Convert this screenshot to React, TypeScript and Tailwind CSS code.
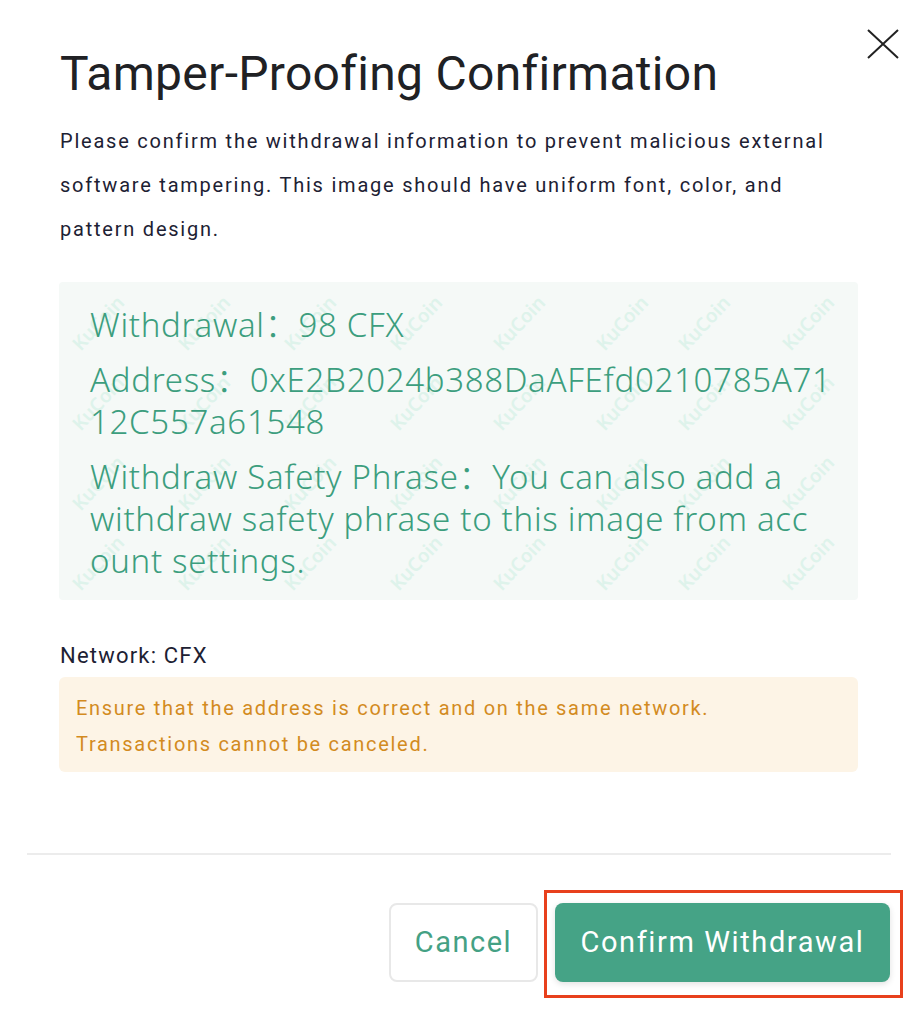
import React from "react";

const marks: { x: number; y: number }[] = [];
const cols = [39, 145, 251, 357, 460, 563, 645, 749];
const rows = [41, 121, 201, 281];
for (const y of rows) for (const x of cols) marks.push({ x, y });

const imgLines: string[][] = [
  ["Withdrawal：98 CFX"],
  ["Address：0xE2B2024b388DaAFEfd0210785A71", "12C557a61548"],
  ["Withdraw Safety Phrase：You can also add a", "withdraw safety phrase to this image from acc", "ount settings."],
];

export default function App() {
  return (
    <div className="relative w-[918px] h-[1010px] bg-white overflow-hidden" style={{ fontFamily: "Roboto, 'Noto Sans', sans-serif" }}>
      {/* close */}
      <button className="absolute left-[866px] top-[28px] w-[34px] h-[32px]" aria-label="close">
        <svg width="34" height="32" viewBox="0 0 34 32">
          <path d="M2 2 L32 30 M32 2 L2 30" stroke="#222" strokeWidth="2" fill="none" />
        </svg>
      </button>

      <div className="px-[60px] pt-[44px]">
        <h1 className="text-[48px] leading-[60px] font-normal text-[#202124] tracking-[0.3px]">Tamper-Proofing Confirmation</h1>
        <p className="mt-[15px] w-[800px] text-[20px] leading-[44px] text-[#1d2133] tracking-[1.78px]">
          Please confirm the withdrawal information to prevent malicious external software tampering. This image should have uniform font, color, and pattern design.
        </p>

        {/* image */}
        <div className="relative mt-[31px] w-[799px] -ml-[1px] bg-[#f5f9f7] rounded-[4px] overflow-hidden pt-[22px] pb-[18px] pl-[31px]">
          {marks.map((m, i) => (
            <span
              key={i}
              aria-hidden="true"
              className="absolute -translate-x-1/2 -translate-y-1/2 -rotate-[47deg] text-[19px] leading-[22px] font-semibold text-[#def3eb] select-none whitespace-nowrap"
              style={{ left: m.x, top: m.y, fontFamily: "'Noto Sans', sans-serif" }}
            >
              KuCoin
            </span>
          ))}
          <div
            className="relative text-[33px] leading-[42px] text-[#3c9e7e] font-light flex flex-col gap-[13px] tracking-[0.7px]"
            style={{ fontFamily: "'Noto Sans', 'Noto Sans CJK SC', sans-serif" }}
          >
            {imgLines.map((para, i) => (
              <div key={i}>
                {para.map((l, j) => (
                  <div key={j} className="whitespace-nowrap">{l}</div>
                ))}
              </div>
            ))}
          </div>
        </div>

        <div className="mt-[43px] text-[22px] leading-[26px] text-[#1d2133] tracking-[1.2px]">Network: CFX</div>
        <div className="mt-[8px] w-[799px] -ml-[1px] rounded-[6px] bg-[#fdf4e6] px-[17px] pt-[13px] pb-[10px] text-[20px] leading-[36px] text-[#d38b1f] tracking-[1.7px]">
          <div>Ensure that the address is correct and on the same network.</div>
          <div>Transactions cannot be canceled.</div>
        </div>
      </div>

      <div className="mx-[27px] mt-[81px] h-[2px] bg-[#ececec]" />

      <div className="flex justify-end gap-[17px] pr-[28px] pt-[48px]">
        <button className="w-[149px] h-[79px] rounded-[8px] border-2 border-[#e8e8e8] bg-white text-[29px] text-[#44a184] font-normal tracking-[1.5px]">
          Cancel
        </button>
        <div className="relative">
          <button className="w-[335px] h-[79px] rounded-[8px] bg-[#45a386] text-white text-[29px] font-normal tracking-[1.6px] shadow-[0_2px_6px_rgba(0,0,0,0.12)]">
            Confirm Withdrawal
          </button>
          <div className="absolute -left-[11px] -top-[13px] -right-[13px] -bottom-[16px] border-[3px] border-[#e8401c] pointer-events-none" />
        </div>
      </div>
    </div>
  );
}
